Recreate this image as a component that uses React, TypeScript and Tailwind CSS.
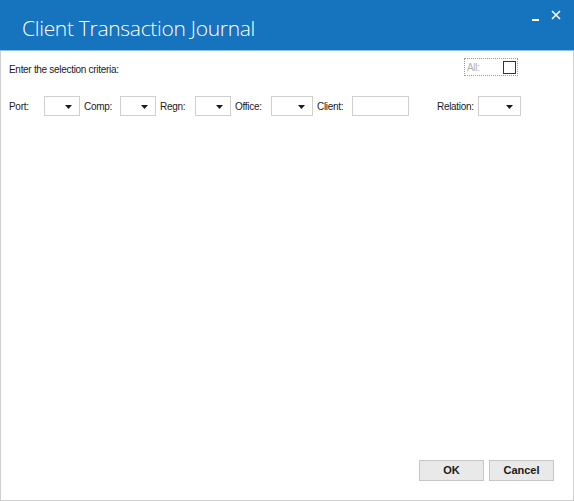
import React from 'react';

const ui = "font-['Liberation_Sans',Arial,sans-serif] text-[10px] tracking-[-0.3px] text-[#1a1a1a]";

function Label({ text, className }: { text: string; className: string }) {
  return <span className={`shrink-0 ${className}`}>{text}</span>;
}

// WinForms style drop-down: white box with a small filled arrow
function Combo({ className }: { className: string }) {
  return (
    <div className={`relative h-[20px] shrink-0 border border-[#cfcfcf] bg-white ${className}`}>
      <svg className="absolute right-[7px] top-[8px]" width="7" height="4" viewBox="0 0 7 4">
        <path d="M0 0h7L3.5 4z" fill="#1a1a1a" />
      </svg>
    </div>
  );
}

function DialogButton({ text }: { text: string }) {
  return (
    <button className="h-[21px] w-[65px] border border-[#c6c6c6] bg-[#e9e9e9] text-[11px] font-bold tracking-normal text-[#1a1a1a]">
      {text}
    </button>
  );
}

export default function App() {
  return (
    <div className={`flex h-[501px] w-[574px] flex-col bg-white ${ui}`}>
      {/* Title bar */}
      <div className="relative h-[51px] shrink-0 border-b border-[#8ebde8] bg-[#1673be]">
        <h1 className="pl-[22px] pt-[13px] font-['Open_Sans',sans-serif] text-[21px] font-light leading-[30px] tracking-[-0.3px] text-white">
          Client Transaction Journal
        </h1>
        <div className="absolute right-[13px] top-[9px] flex items-center gap-[12px] text-white">
          <div className="mt-[10px] h-[2px] w-[7px] bg-white" />
          <svg width="10" height="10" viewBox="0 0 10 10">
            <path d="M1 1l8 8M9 1l-8 8" stroke="white" strokeWidth="1.6" />
          </svg>
        </div>
      </div>

      {/* Body */}
      <div className="flex flex-1 flex-col border-x border-b border-[#cfcfcf]">
        <div className="flex items-start justify-between pl-[8px] pr-[55px] pt-[7px]">
          <span className="mt-[4px]">Enter the selection criteria:</span>
          <div className="flex h-[18px] w-[54px] items-center justify-between border border-dotted border-[#9a9a9a] pl-[2px] pr-[1px]">
            <span className="text-[#b0b0b0]">All:</span>
            <div className="h-[13px] w-[13px] border border-[#333]" />
          </div>
        </div>

        <div className="mt-[19px] flex items-center">
          <Label text="Port:" className="ml-[8px] w-[35px]" />
          <Combo className="w-[36px]" />
          <Label text="Comp:" className="ml-[4px] w-[36px]" />
          <Combo className="w-[36px]" />
          <Label text="Regn:" className="ml-[4px] w-[35px]" />
          <Combo className="w-[36px]" />
          <Label text="Office:" className="ml-[4px] w-[36px]" />
          <Combo className="w-[42px]" />
          <Label text="Client:" className="ml-[4px] w-[35px]" />
          <div className="h-[20px] w-[57px] shrink-0 border border-[#cfcfcf] bg-white" />
          <Label text="Relation:" className="ml-[28px] w-[41px]" />
          <Combo className="w-[43px]" />
        </div>

        <div className="flex-1" />

        <div className="flex justify-end gap-[5px] pb-[19px] pr-[19px]">
          <DialogButton text="OK" />
          <DialogButton text="Cancel" />
        </div>
      </div>
    </div>
  );
}
